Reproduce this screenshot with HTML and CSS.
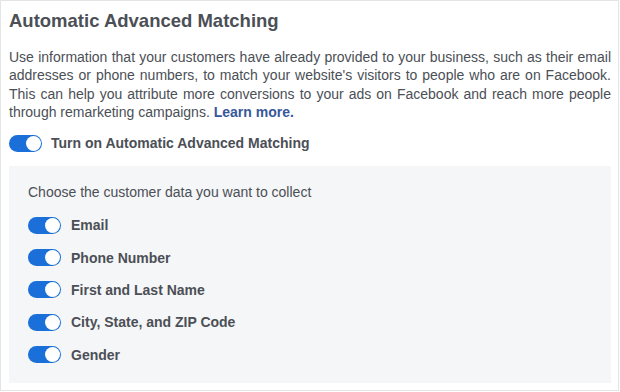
FILE: index.html
```html
<!DOCTYPE html>
<html>
<head>
<meta charset="utf-8">
<link rel="stylesheet" href="styles.css">
</head>
<body>
<div class="panel">
  <h1 class="title">Automatic Advanced Matching</h1>
  <p class="desc">Use information that your customers have already provided to your business, such as their email addresses or phone numbers, to match your website's visitors to people who are on Facebook. This can help you attribute more conversions to your ads on Facebook and reach more people through remarketing campaigns. <a class="link" href="#">Learn more.</a></p>
  <div class="row main-row">
    <span class="toggle"><span class="knob"></span></span>
    <span class="label">Turn on Automatic Advanced Matching</span>
  </div>
  <div class="box">
    <div class="box-head">Choose the customer data you want to collect</div>
    <div class="row"><span class="toggle"><span class="knob"></span></span><span class="label">Email</span></div>
    <div class="row"><span class="toggle"><span class="knob"></span></span><span class="label">Phone Number</span></div>
    <div class="row"><span class="toggle"><span class="knob"></span></span><span class="label">First and Last Name</span></div>
    <div class="row"><span class="toggle"><span class="knob"></span></span><span class="label">City, State, and ZIP Code</span></div>
    <div class="row"><span class="toggle"><span class="knob"></span></span><span class="label">Gender</span></div>
  </div>
</div>
</body>
</html>
```
FILE: styles.css
```css
html, body {
  margin: 0;
  padding: 0;
  background: #ffffff;
}
body {
  font-family: "Liberation Sans", Arial, sans-serif;
  color: #4b4f56;
}
.panel {
  width: 619px;
  height: 391px;
  box-sizing: border-box;
  border: 1px solid #e3e4e6;
  padding: 0 7px 0 8px;
}
.title {
  margin: 0;
  padding-top: 8px;
  font-size: 18.5px;
  line-height: 24px;
  font-weight: bold;
  color: #4b4f56;
}
.desc {
  margin: 15px 0 0 0;
  font-size: 14px;
  line-height: 18.3px;
  text-align: justify;
  color: #4b4f56;
}
.link {
  color: #365899;
  font-weight: bold;
  text-decoration: none;
}
.row {
  display: flex;
  align-items: center;
  gap: 9px;
  height: 32.3px;
}
.main-row {
  margin-top: 10px;
  height: 24px;
}
.label {
  font-size: 14px;
  font-weight: bold;
  color: #4b4f56;
}
.toggle {
  position: relative;
  width: 33px;
  height: 17px;
  border-radius: 9px;
  background: #1a6fd9;
  flex: none;
}
.knob {
  position: absolute;
  right: 1px;
  top: 1px;
  width: 15px;
  height: 15px;
  border-radius: 50%;
  background: #ffffff;
}
.box {
  margin-top: 11px;
  background: #f5f6f7;
  padding: 17px 19px 12px 19px;
  height: 217px;
  box-sizing: border-box;
}
.box-head {
  font-size: 14px;
  line-height: 18px;
  margin-bottom: 8px;
  color: #4b4f56;
}
.box .row {
  gap: 10px;
}
```
